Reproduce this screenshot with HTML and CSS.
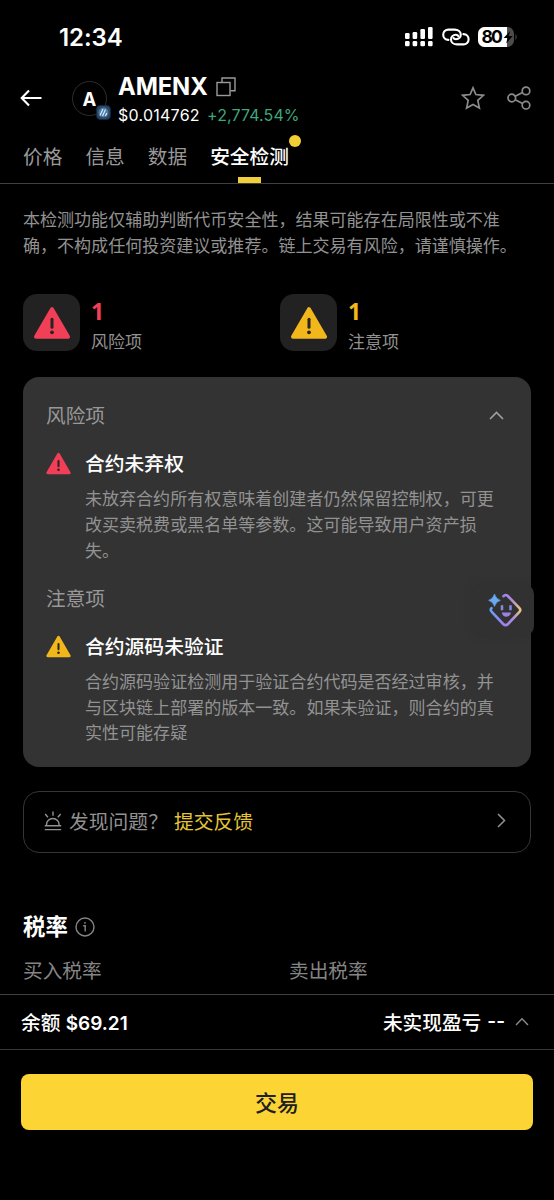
FILE: index.html
```html
<!DOCTYPE html>
<html lang="zh-CN">
<head>
<meta charset="utf-8">
<title>AMENX</title>
<link rel="stylesheet" href="styles.css">
</head>
<body>
<svg class="defs" width="0" height="0">
  <symbol id="warn" viewBox="0 0 36 34">
    <path d="M18 3.2 L34 30.8 H2 Z" fill="currentColor" stroke="currentColor" stroke-width="4" stroke-linejoin="round"/>
    <path d="M18 13.2v8" class="mark" stroke-width="3" stroke-linecap="round"/>
    <circle cx="18" cy="26.3" r="1.9" class="dot"/>
  </symbol>
</svg>
<div class="screen">
  <div class="status">
    <span class="time">12:34</span>
    <div class="status-icons">
      <svg width="28" height="20" viewBox="0 0 28 20" fill="#fff">
        <rect x="0" y="6" width="4.6" height="6" rx="1.2"/><rect x="7.6" y="5" width="4.6" height="7" rx="1.2"/><rect x="15.4" y="2" width="4.6" height="10" rx="1.2"/><rect x="23" y="0" width="4.6" height="12" rx="1.2"/>
        <rect x="0" y="14" width="4.6" height="5.3" rx="1.3"/><rect x="7.6" y="14" width="4.6" height="5.3" rx="1.3"/><rect x="15.4" y="14" width="4.6" height="5.3" rx="1.3"/><rect x="23" y="14" width="4.6" height="5.3" rx="1.3"/>
      </svg>
      <svg class="link" width="28" height="18" viewBox="0 0 28 18" fill="none" stroke="#fff" stroke-width="2.1" stroke-linecap="round">
        <path d="M6.4 11.9C3.1 11.8 1.2 9.4 1.2 6.8c0-3 2.2-5.2 5.2-5.2h6.2c3.6 0 6.2 2.2 6.2 5 0 2.6-1.9 4.6-4.8 4.6-1.3 0-2.2-.5-2.5-1.3"/>
        <path d="M21.4 6.1c3.3.1 5.2 2.5 5.2 5.1 0 3-2.2 5.2-5.2 5.2h-6.2c-3.6 0-6.2-2.2-6.2-5 0-2.6 1.9-4.6 4.8-4.6 1.3 0 2.2.5 2.5 1.3"/>
      </svg>
      <svg width="39" height="20" viewBox="0 0 39 20">
        <defs><clipPath id="cell"><rect width="36" height="20" rx="6.5"/></clipPath></defs>
        <g clip-path="url(#cell)"><rect width="36" height="20" fill="#4c4c4c"/><rect width="29" height="20" fill="#fff"/></g>
        <path d="M37.5 7v6q1.2-1 1.2-3t-1.2-3z" fill="#4c4c4c"/>
        <text x="3.4" y="16.1" class="pct" textLength="21.5">80</text>
        <path d="M32.2 4l-6.6 7.1h4l-1.5 5.4 6.7-7.5h-4.1z" fill="#000"/>
      </svg>
    </div>
  </div>

  <header class="header">
    <svg class="back" width="22" height="18" viewBox="0 0 22 18" fill="none" stroke="#fff" stroke-width="2.1"><path d="M9 1.5L1.7 9 9 16.5M2 9h19.5"/></svg>
    <div class="avatar">A
      <svg class="chain" width="15" height="15" viewBox="0 0 15 15"><rect x=".5" y=".5" width="14" height="14" rx="4" fill="#294766" stroke="#14283c"/><circle cx="7.5" cy="7.5" r="5" fill="#4c7ba7"/><path d="M4 10.5L7 4M6.5 11l3-6.5M9.5 11l1.2-3" stroke="#dbeaf5" stroke-width="1.2"/></svg>
    </div>
    <div class="token">
      <div class="name-row"><span class="name">AMENX</span>
        <svg width="20" height="20" viewBox="0 0 20 20" fill="none" stroke="#9a9a9a" stroke-width="1.4"><rect x="1" y="5.5" width="13" height="13"/><path d="M6 5V1h13v12.7h-4.6"/></svg>
      </div>
      <div class="price-row"><span class="price">$0.014762</span><span class="change">+2,774.54%</span></div>
    </div>
    <div class="actions">
      <svg width="24" height="24" viewBox="0 0 24 24" fill="none" stroke="#8b8b8b" stroke-width="1.7"><path d="M12 1.8l2.9 6.7 7.5.8-5.6 5 1.6 7.7-6.4-3.5L5.6 22l1.6-7.7-5.6-5 7.5-.8z"/></svg>
      <svg width="24" height="24" viewBox="0 0 24 24" fill="none" stroke="#8b8b8b" stroke-width="1.7"><circle cx="4.8" cy="12" r="3.8"/><circle cx="19" cy="4.9" r="3.8"/><circle cx="19" cy="19.2" r="3.8"/><path d="M8.2 10.3l7.4-3.7M8.2 13.7l7.4 3.8"/></svg>
    </div>
  </header>

  <nav class="tabs">
    <span>价格</span><span>信息</span><span>数据</span><span class="active">安全检测<i class="badge"></i></span>
  </nav>

  <main class="content">
    <p class="notice">本检测功能仅辅助判断代币安全性，结果可能存在局限性或不准<br>确，不构成任何投资建议或推荐。链上交易有风险，请谨慎操作。</p>

    <section class="stats">
      <div class="stat red"><div class="tile"><svg width="36" height="34"><use href="#warn"/></svg></div><div class="stat-text"><b>1</b><span>风险项</span></div></div>
      <div class="stat yellow"><div class="tile"><svg width="36" height="34"><use href="#warn"/></svg></div><div class="stat-text"><b>1</b><span>注意项</span></div></div>
    </section>

    <section class="card">
      <div class="group-head"><span>风险项</span><svg width="15" height="9" viewBox="0 0 15 9" fill="none" stroke="#a0a0a0" stroke-width="1.6"><path d="M1 8l6.5-6.5L14 8"/></svg></div>
      <div class="item red">
        <svg width="25" height="23"><use href="#warn"/></svg>
        <div><h3>合约未弃权</h3><p>未放弃合约所有权意味着创建者仍然保留控制权，可更<br>改买卖税费或黑名单等参数。这可能导致用户资产损<br>失。</p></div>
      </div>
      <div class="group-head second"><span>注意项</span></div>
      <div class="item yellow">
        <svg width="25" height="23"><use href="#warn"/></svg>
        <div><h3>合约源码未验证</h3><p>合约源码验证检测用于验证合约代码是否经过审核，并<br>与区块链上部署的版本一致。如果未验证，则合约的真<br>实性可能存疑</p></div>
      </div>
    </section>

    <section class="feedback">
      <svg width="18" height="20" viewBox="0 0 18 20" fill="none" stroke="#929292" stroke-width="1.4"><path d="M2.5 14.5v-.7a6.3 6.3 0 0 1 12.6 0v.7M.8 14.7h16.4M.8 18.6h16.4M9 .6v4.2M1.2 3l2.7 3.2M16.6 3l-2.7 3.2"/></svg>
      <span class="question">发现问题？</span><a>提交反馈</a>
      <svg class="next" width="9" height="15" viewBox="0 0 9 15" fill="none" stroke="#929292" stroke-width="1.5"><path d="M1 1l6.5 6.5L1 14"/></svg>
    </section>

    <section class="tax">
      <div class="tax-title"><h2>税率</h2><svg width="20" height="20" viewBox="0 0 20 20" fill="none" stroke="#858585" stroke-width="1.4"><circle cx="10" cy="10" r="9"/><path d="M8.2 8.7h2v5.8M10 5v1.7"/></svg></div>
      <div class="tax-labels"><span>买入税率</span><span>卖出税率</span></div>
    </section>
  </main>

  <footer>
    <div class="balance"><span>余额 <em>$69.21</em></span><span class="pnl">未实现盈亏 <em>--</em><svg width="14" height="9" viewBox="0 0 14 9" fill="none" stroke="#8b8b8b" stroke-width="1.4"><path d="M1 8l6-6.2L13 8"/></svg></span></div>
    <div class="trade-area"><button>交易</button></div>
  </footer>

  <div class="assistant">
    <svg width="34" height="34" viewBox="0 0 34 34" fill="none">
      <defs><linearGradient id="glow" x1="0" y1="20" x2="34" y2="17" gradientUnits="userSpaceOnUse"><stop stop-color="#5aa8f5"/><stop offset=".4" stop-color="#9b80ee"/><stop offset=".72" stop-color="#ad8bdc"/><stop offset="1" stop-color="#f3cf72"/></linearGradient></defs>
      <path d="M15.5 3.2Q17.6.8 19.8 3L31.2 14.8Q33.4 17 31.2 19.2L20 31Q17.6 33.4 15.2 31L4 19.2Q1.8 17 3.5 15.2" stroke="url(#glow)" stroke-width="2.6" stroke-linecap="round"/>
      <path d="M6.5 1Q7.8 6 12.4 7.3 7.8 8.8 6.5 13.5 5.2 8.8.6 7.3 5.2 6 6.5 1z" fill="#6aa9f4" stroke="#6aa9f4" stroke-width=".6"/>
      <path d="M14 12.2v5M22.5 12.2v5" stroke="#8788e4" stroke-width="2.5"/>
      <path d="M13.7 19.5h9.4q-1 4.2-4.7 4.2t-4.7-4.2z" fill="#9a83dd"/>
    </svg>
  </div>
</div>
</body>
</html>
```
FILE: styles.css
```css
* { box-sizing: border-box; }
body { margin: 0; background: #000; }
.defs { position: absolute; }
svg { display: block; flex: none; }
.screen {
  position: relative;
  width: 554px;
  height: 1200px;
  overflow: hidden;
  display: flex;
  flex-direction: column;
  background: #000;
  color: #fff;
  font-family: Inter, "Noto Sans CJK SC", sans-serif;
  white-space: nowrap;
}
.status { height: 74px; padding: 0 37px 0 59px; display: flex; justify-content: space-between; align-items: center; }
.time { font-size: 24px; font-weight: 600; letter-spacing: -.05px; }
.status-icons { display: flex; align-items: center; gap: 8.5px; }
.pct { font: 700 17.5px Inter, sans-serif; }

.header { height: 56px; padding: 0 23px 0 20px; display: flex; }
.back { margin-top: 15px; }
.avatar {
  position: relative;
  width: 35px; height: 35px;
  margin: 7px 0 0 30px;
  border: 1px solid #2d2d2d;
  border-radius: 50%;
  display: grid; place-items: center;
  font-size: 18.5px; font-weight: 700;
}
.chain { position: absolute; left: 23px; top: 23px; }
.token { margin-left: 11px; }
.name-row { display: flex; align-items: center; gap: 8px; height: 25px; }
.name { font: 700 23.8px/25px Inter, sans-serif; letter-spacing: -.1px; }
.price-row { display: flex; gap: 7px; font-size: 16px; line-height: 20px; margin-top: 6px; }
.price { width: 82px; letter-spacing: .25px; }
.change { color: #3fa77b; letter-spacing: .1px; }
.actions { display: flex; gap: 22px; margin: 12px 0 0 auto; }

.tabs { height: 54px; padding: 0 23px; display: flex; gap: 23px; border-bottom: 1px solid #404040; font-size: 19.7px; line-height: 55px; color: #999; }
.tabs .active { position: relative; color: #fff; font-weight: 500; }
.tabs .active::after { content: ""; position: absolute; left: 28px; bottom: 0; width: 23px; height: 6px; background: #f0cf3d; }
.badge { position: absolute; right: -12px; top: 5px; width: 12px; height: 12px; border-radius: 50%; background: #f3cf35; }

.content { height: 810px; padding: 23px 23px 0; }
p { margin: 0; }
.notice { font-size: 17.04px; line-height: 25.7px; color: #929292; }
.stats { display: grid; grid-template-columns: 257px 1fr; margin-top: 36px; height: 57px; }
.stat { display: flex; gap: 11px; }
.red { color: #f13f57; }
.yellow { color: #f1b71b; }
.tile { width: 57px; height: 57px; border-radius: 14px; background: #222; display: grid; place-items: center; }
.mark { stroke: #292323; }
.dot { fill: #292323; }
.stat-text { display: flex; flex-direction: column; }
.stat-text b { font: 700 23px/34px "Noto Sans", sans-serif; }
.stat-text span { color: #929292; font-size: 17px; line-height: 28px; }

.card { margin-top: 26px; height: 390px; border-radius: 16px; background: #333; padding: 25px 23px 0; }
.group-head { display: flex; justify-content: space-between; align-items: center; padding-right: 4px; color: #989898; font-size: 19.7px; line-height: 28px; }
.group-head svg { margin-top: -2px; }
.item { display: flex; gap: 14px; margin-top: 18px; }
.item > svg { margin-top: 4px; }
.item h3 { margin: 0; color: #fff; font-size: 19.8px; font-weight: 500; line-height: 32px; }
.item p { color: #929292; font-size: 17.04px; line-height: 25.6px; margin-top: 6px; }
.second { margin-top: 22px; }

.feedback { margin-top: 24px; height: 62px; border: 1.5px solid #353535; border-radius: 16px; padding: 0 24px 3px 20px; display: flex; align-items: center; font-size: 19.8px; color: #929292; }
.question { margin-left: 7px; width: 105px; }
.feedback a { color: #e4c438; }
.next { margin-left: auto; }

.tax { margin-top: 58px; }
.tax-title { display: flex; align-items: center; gap: 7px; height: 32px; }
h2 { margin: 0; font-size: 22.4px; font-weight: 700; line-height: 32px; }
.tax-labels { display: grid; grid-template-columns: 266px 1fr; margin-top: 14px; color: #858585; font-size: 19.7px; line-height: 28px; }

.balance { height: 56px; padding: 0 25px 1px 21px; display: flex; justify-content: space-between; align-items: center; border-top: 1.5px solid #404040; border-bottom: 1.5px solid #383838; font-size: 19.7px; font-weight: 500; }
.balance em { font-style: normal; font-weight: 600; font-size: 19px; }
.pnl { display: flex; align-items: center; }
.pnl em { margin: 0 10px 0 6px; }
.trade-area { padding: 24px 21px 0; }
button { display: block; width: 100%; height: 56px; border: 0; border-radius: 8px; padding: 0 0 3px; background: #fcd535; color: #202020; font: 500 22px "Noto Sans CJK SC", sans-serif; }

.assistant { position: absolute; left: 472px; top: 584px; width: 62px; height: 52px; padding: 9px 0 0 16px; border-radius: 10px; background: #313131; box-shadow: 0 0 12px rgba(0,0,0,.07); }
```
